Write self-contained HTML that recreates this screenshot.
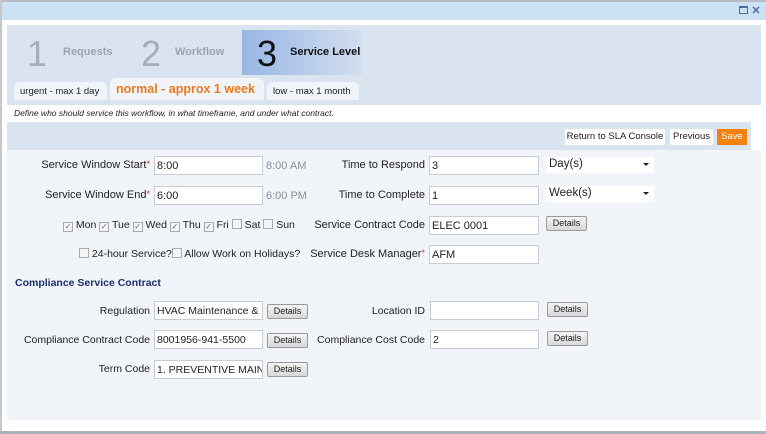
<!DOCTYPE html>
<html><head><style>
*{margin:0;padding:0;box-sizing:border-box}
body{width:766px;height:434px;background:#fff;font-family:"Liberation Sans",sans-serif;font-size:11px;color:#222;position:relative;overflow:hidden}
.a{position:absolute;white-space:nowrap}
.inp{position:absolute;background:#fff;border:1px solid #c8ccd2;height:19px;font-size:11px;padding:3px 0 0 2px;white-space:nowrap;overflow:hidden}
.lbl{position:absolute;text-align:right;white-space:nowrap;font-size:11px}
.req{color:#c33;font-size:9px;vertical-align:top}
.det{position:absolute;height:15px;width:41px;border:1px solid #9a9a9a;border-radius:2px;background:linear-gradient(#f4f4f4,#d8d8d8);font-size:9px;text-align:center;line-height:13px}
.cb{display:inline-block;width:10px;height:10px;border:1px solid #aaa;background:#f4f4f4;vertical-align:-1px;font-size:8px;line-height:8px;text-align:center;color:#668}
.sel{position:absolute;background:#fff;height:16px;width:108px;font-size:11.5px;padding:1px 0 0 3px}
.sel:after{content:"";position:absolute;right:5px;top:6px;border:3px solid transparent;border-top:3px solid #222}
</style></head><body>
<div class="a" style="left:0;top:0;width:766px;height:2px;background:#b8bcc2"></div>
<div class="a" style="left:0;top:0;width:2px;height:434px;background:#c4c8cc"></div>
<div class="a" style="left:0;top:431px;width:766px;height:3px;background:#a8b4bf"></div>
<div class="a" style="left:2px;top:2px;width:764px;height:18px;background:#cce0f6"></div>
<div class="a" style="left:739px;top:6px;width:9px;height:8px;border:1px solid #4a6aa0;border-top-width:2px"></div>
<svg class="a" style="left:752px;top:6px" width="8" height="8"><path d="M1 1L7 7M7 1L1 7" stroke="#4a6aa0" stroke-width="1.5"/></svg>

<div class="a" style="left:7px;top:25px;width:754px;height:80px;background:#dae3f0"></div>
<div class="a" style="left:242px;top:30px;width:120px;height:45px;background:linear-gradient(90deg,#97b7e4,#d3def0)"></div>
<div class="a" style="left:27px;top:34px;font-size:36px;color:#a8adb3;line-height:40px">1</div>
<div class="a" style="left:63px;top:46px;font-size:11px;color:#9ea4ab;font-weight:bold">Requests</div>
<div class="a" style="left:141px;top:34px;font-size:36px;color:#a8adb3;line-height:40px">2</div>
<div class="a" style="left:175px;top:46px;font-size:11px;color:#9ea4ab;font-weight:bold">Workflow</div>
<div class="a" style="left:257px;top:34px;font-size:36px;color:#111;line-height:40px">3</div>
<div class="a" style="left:290px;top:46px;font-size:11px;color:#111;font-weight:bold">Service Level</div>

<div class="a" style="left:14px;top:82px;width:93px;height:18px;background:#f1f5fa;border-radius:5px 5px 0 0;font-size:9.5px;padding:4px 0 0 6px">urgent - max 1 day</div>
<div class="a" style="left:110px;top:78px;width:154px;height:22px;background:#f1f5fa;border-radius:6px 6px 0 0;font-size:12.5px;font-weight:bold;color:#e87a1e;padding:4px 0 0 6px">normal - approx 1 week</div>
<div class="a" style="left:267px;top:82px;width:92px;height:18px;background:#f1f5fa;border-radius:5px 5px 0 0;font-size:9.5px;padding:4px 0 0 6px">low - max 1 month</div>

<div class="a" style="left:7px;top:105px;width:744px;height:17px;background:#fff;font-size:8.5px;font-style:italic;padding:3px 0 0 7px">Define who should service this workflow, in what timeframe, and under what contract.</div>
<div class="a" style="left:7px;top:122px;width:744px;height:28px;background:#dae3f0"></div>
<div class="a" style="left:565px;top:129px;width:100px;height:16px;background:#fff;border-radius:2px;font-size:9.5px;text-align:center;line-height:16px">Return to SLA Console</div>
<div class="a" style="left:670px;top:129px;width:43px;height:16px;background:#fff;border-radius:2px;font-size:9.5px;text-align:center;line-height:16px">Previous</div>
<div class="a" style="left:717px;top:129px;width:30px;height:16px;background:#f5820e;color:#fff;font-size:9.5px;text-align:center;line-height:16px">Save</div>

<div class="a" style="left:7px;top:150px;width:754px;height:270px;background:#f1f5f9"></div>

<div class="lbl" style="right:616px;top:159px">Service Window Start<span class="req">*</span></div>
<div class="inp" style="left:154px;top:156px;width:109px">8:00</div>
<div class="a" style="left:266px;top:160px;color:#8a9099">8:00 AM</div>
<div class="lbl" style="right:616px;top:189px">Service Window End<span class="req">*</span></div>
<div class="inp" style="left:154px;top:186px;width:109px">6:00</div>
<div class="a" style="left:266px;top:190px;color:#8a9099">6:00 PM</div>
<div class="a" style="left:63px;top:219px;font-size:10.5px"><span class="cb">✓</span> Mon <span class="cb">✓</span> Tue <span class="cb">✓</span> Wed <span class="cb">✓</span> Thu <span class="cb">✓</span> Fri <span class="cb"></span> Sat <span class="cb"></span> Sun</div>
<div class="a" style="left:79px;top:248px;font-size:10.5px"><span class="cb"></span> 24-hour Service?<span class="cb"></span> Allow Work on Holidays?</div>

<div class="lbl" style="right:341px;top:159px">Time to Respond</div>
<div class="inp" style="left:429px;top:156px;width:110px">3</div>
<div class="sel" style="left:546px;top:157px">Day(s)</div>
<div class="lbl" style="right:341px;top:189px">Time to Complete</div>
<div class="inp" style="left:429px;top:186px;width:110px">1</div>
<div class="sel" style="left:546px;top:186px">Week(s)</div>
<div class="lbl" style="right:341px;top:219px">Service Contract Code</div>
<div class="inp" style="left:429px;top:216px;width:110px">ELEC 0001</div>
<div class="det" style="left:546px;top:216px">Details</div>
<div class="lbl" style="right:341px;top:248px">Service Desk Manager<span class="req">*</span></div>
<div class="inp" style="left:429px;top:245px;width:110px">AFM</div>

<div class="a" style="left:15px;top:277px;font-weight:bold;color:#1c2f6b;font-size:10.5px">Compliance Service Contract</div>

<div class="lbl" style="right:616px;top:305px;font-size:10.5px">Regulation</div>
<div class="inp" style="left:154px;top:301px;width:109px;font-size:10.5px">HVAC Maintenance &amp;</div>
<div class="det" style="left:267px;top:304px">Details</div>
<div class="lbl" style="right:616px;top:334px;font-size:10.5px">Compliance Contract Code</div>
<div class="inp" style="left:154px;top:330px;width:109px;font-size:10.5px">8001956-941-5500</div>
<div class="det" style="left:267px;top:333px">Details</div>
<div class="lbl" style="right:616px;top:363px;font-size:10.5px">Term Code</div>
<div class="inp" style="left:154px;top:360px;width:109px;font-size:10.5px">1. PREVENTIVE MAINT</div>
<div class="det" style="left:267px;top:362px">Details</div>

<div class="lbl" style="right:341px;top:305px;font-size:10.5px">Location ID</div>
<div class="inp" style="left:430px;top:301px;width:109px"></div>
<div class="det" style="left:547px;top:302px">Details</div>
<div class="lbl" style="right:341px;top:334px;font-size:10.5px">Compliance Cost Code</div>
<div class="inp" style="left:430px;top:330px;width:109px;font-size:10.5px">2</div>
<div class="det" style="left:547px;top:331px">Details</div>
</body></html>
